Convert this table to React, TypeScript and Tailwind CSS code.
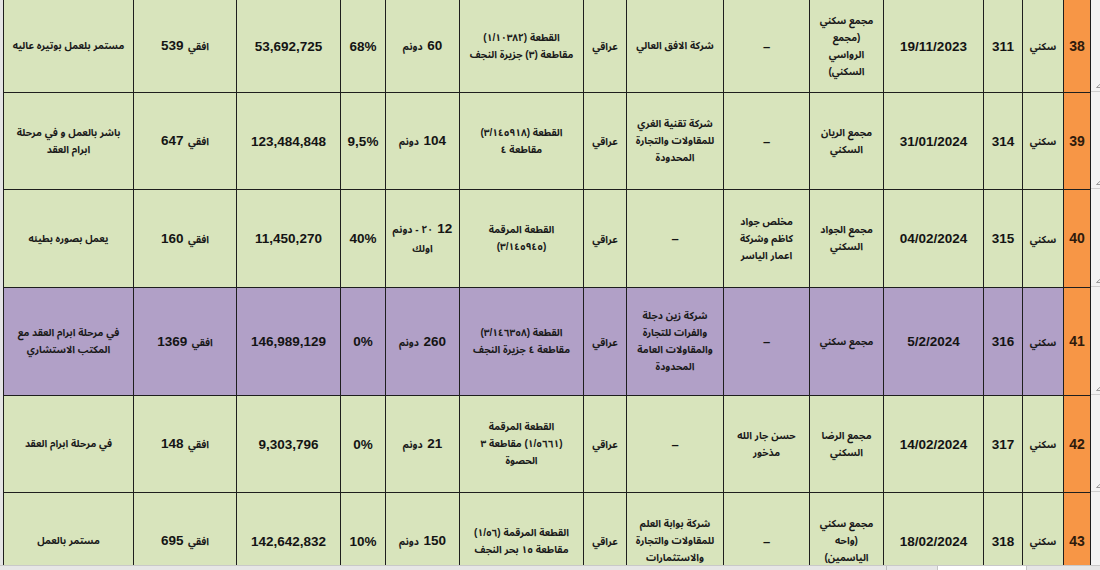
import React from 'react'

// Excel-like sheet: residential projects list (RTL)

const N = ({ children }: { children: React.ReactNode }) => (
  <span className="font-bold text-[13.5px] text-[#141414]">{children}</span>
)

const A = ({ children }: { children: React.ReactNode }) => (
  <span className="font-bold text-[10px] text-[#1a1a1a] whitespace-nowrap">{children}</span>
)

const Lines = ({ items }: { items: string[] }) => (
  <div className="font-bold text-[10px] leading-[17px] text-[#1a1a1a] whitespace-nowrap">
    {items.map((t, i) => (
      <div key={i}>{t}</div>
    ))}
  </div>
)

const Dash = () => <span className="font-bold text-[13px] text-[#141414]">–</span>

type Row = {
  h: string
  bg: string
  cells: React.ReactNode[]
  first?: boolean
}

const GREEN = 'bg-[#d8e4bc]'
const PURPLE = 'bg-[#b1a0c7]'

const rows: Row[] = [
  {
    h: 'h-[92px]',
    bg: GREEN,
    first: true,
    cells: [
      '38',
      <A>سكني</A>,
      <N>311</N>,
      <N>19/11/2023</N>,
      <Lines items={['مجمع سكني', '(مجمع', 'الرواسي', 'السكني)']} />,
      <Dash />,
      <Lines items={['شركة الافق العالي']} />,
      <A>عراقي</A>,
      <Lines items={['القطعة (١/١٠٣٨٢)', 'مقاطعة (٣) جزيرة النجف']} />,
      <>
        <N>60</N> <A>دونم</A>
      </>,
      <N>68%</N>,
      <N>53,692,725</N>,
      <>
        <A>افقي</A> <N>539</N>
      </>,
      <Lines items={['مستمر بلعمل بوتيره عاليه']} />,
    ],
  },
  {
    h: 'h-[97px]',
    bg: GREEN,
    cells: [
      '39',
      <A>سكني</A>,
      <N>314</N>,
      <N>31/01/2024</N>,
      <Lines items={['مجمع الريان', 'السكني']} />,
      <Dash />,
      <Lines items={['شركة تقنية الغري', 'للمقاولات والتجارة', 'المحدودة']} />,
      <A>عراقي</A>,
      <Lines items={['القطعة (٣/١٤٥٩١٨)', 'مقاطعة ٤']} />,
      <>
        <N>104</N> <A>دونم</A>
      </>,
      <N>9,5%</N>,
      <N>123,484,848</N>,
      <>
        <A>افقي</A> <N>647</N>
      </>,
      <Lines items={['باشر بالعمل و في مرحلة', 'ابرام العقد']} />,
    ],
  },
  {
    h: 'h-[98px]',
    bg: GREEN,
    cells: [
      '40',
      <A>سكني</A>,
      <N>315</N>,
      <N>04/02/2024</N>,
      <Lines items={['مجمع الجواد', 'السكني']} />,
      <Lines items={['مخلص جواد', 'كاظم وشركة', 'اعمار الياسر']} />,
      <Dash />,
      <A>عراقي</A>,
      <Lines items={['القطعة المرقمة', '(٣/١٤٥٩٤٥)']} />,
      <div className="leading-[17px] whitespace-nowrap">
        <div>
          <N>12</N> <A>٢٠ - دونم</A>
        </div>
        <div>
          <A>اولك</A>
        </div>
      </div>,
      <N>40%</N>,
      <N>11,450,270</N>,
      <>
        <A>افقي</A> <N>160</N>
      </>,
      <Lines items={['يعمل بصوره بطيئه']} />,
    ],
  },
  {
    h: 'h-[108px]',
    bg: PURPLE,
    cells: [
      '41',
      <A>سكني</A>,
      <N>316</N>,
      <N>5/2/2024</N>,
      <Lines items={['مجمع سكني']} />,
      <Dash />,
      <Lines items={['شركة زين دجلة', 'والفرات للتجارة', 'والمقاولات العامة', 'المحدودة']} />,
      <A>عراقي</A>,
      <Lines items={['القطعة (٣/١٤٦٣٥٨)', 'مقاطعة ٤ جزيرة النجف']} />,
      <>
        <N>260</N> <A>دونم</A>
      </>,
      <N>0%</N>,
      <N>146,989,129</N>,
      <>
        <A>افقي</A> <N>1369</N>
      </>,
      <Lines items={['في مرحلة ابرام العقد مع', 'المكتب الاستشاري']} />,
    ],
  },
  {
    h: 'h-[97px]',
    bg: GREEN,
    cells: [
      '42',
      <A>سكني</A>,
      <N>317</N>,
      <N>14/02/2024</N>,
      <Lines items={['مجمع الرضا', 'السكني']} />,
      <Lines items={['حسن جار الله', 'مذخور']} />,
      <Dash />,
      <A>عراقي</A>,
      <Lines items={['القطعة المرقمة', '(١/٥٦٦١) مقاطعة ٣', 'الحصوة']} />,
      <>
        <N>21</N> <A>دونم</A>
      </>,
      <N>0%</N>,
      <N>9,303,796</N>,
      <>
        <A>افقي</A> <N>148</N>
      </>,
      <Lines items={['في مرحلة ابرام العقد']} />,
    ],
  },
  {
    h: 'h-[97px]',
    bg: GREEN,
    cells: [
      '43',
      <A>سكني</A>,
      <N>318</N>,
      <N>18/02/2024</N>,
      <Lines items={['مجمع سكني', '(واحه', 'الياسمين)']} />,
      <Dash />,
      <Lines items={['شركة بوابة العلم', 'للمقاولات والتجارة', 'والاستثمارات']} />,
      <A>عراقي</A>,
      <Lines items={['القطعة المرقمة (١/٥٦)', 'مقاطعة ١٥ بحر النجف']} />,
      <>
        <N>150</N> <A>دونم</A>
      </>,
      <N>10%</N>,
      <N>142,642,832</N>,
      <>
        <A>افقي</A> <N>695</N>
      </>,
      <Lines items={['مستمر بالعمل']} />,
    ],
  },
]

// column widths, right to left
const cols = [
  'w-[27px]',
  'w-[41px]',
  'w-[39px]',
  'w-[100px]',
  'w-[74px]',
  'w-[86px]',
  'w-[97px]',
  'w-[43px]',
  'w-[124px]',
  'w-[74px]',
  'w-[45px]',
  'w-[104px]',
  'w-[103px]',
  'w-[130px]',
]

const stripHeights = ['h-[92px]', 'h-[97px]', 'h-[98px]', 'h-[108px]', 'h-[97px]', 'h-[97px]']

const Corner = () => (
  <svg width="7" height="7" viewBox="0 0 7 7" className="mb-[3px] -mr-[2px]">
    <polyline points="7,0.5 0.5,6.5 7,6.5" fill="none" stroke="#9a9a9a" strokeWidth="1" />
  </svg>
)

export default function App() {
  return (
    <div className="w-[1100px] h-[570px] overflow-hidden bg-[#efefef] flex flex-col font-['Liberation_Sans','Noto_Sans_Arabic',sans-serif]">
      <div className="h-[565px] flex overflow-hidden">
        <div className="w-[3px] shrink-0 bg-[#e4e4e4]" />

        <table dir="rtl" className="w-[1087px] shrink-0 table-fixed border-collapse self-start">
          <colgroup>
            {cols.map((c, i) => (
              <col key={i} className={c} />
            ))}
          </colgroup>
          <tbody>
            {rows.map((r, ri) => (
              <tr key={ri} className={r.h}>
                {r.cells.map((c, ci) => (
                  <td
                    key={ci}
                    className={`border border-[#1e1e1e] text-center align-middle p-0 leading-[17px] overflow-hidden ${
                      r.first ? 'border-t-0' : ''
                    } ${ci === 0 ? 'bg-[#f79646]' : r.bg}`}
                  >
                    {ci === 0 ? (
                      <span className="font-bold text-[14px] text-[#2e1a0c]">{c}</span>
                    ) : (
                      c
                    )}
                  </td>
                ))}
              </tr>
            ))}
          </tbody>
        </table>

        {/* row header strip on the right edge */}
        <div className="w-[10px] shrink-0 flex flex-col bg-[#f3f3f3]">
          {stripHeights.map((h, i) => (
            <div
              key={i}
              className={`${h} shrink-0 border-b border-[#cfcfcf] flex items-end justify-end`}
            >
              <Corner />
            </div>
          ))}
        </div>
      </div>

      {/* sheet tabs bar */}
      <div className="h-[5px] flex bg-[#e6e6e6] border-t border-[#c9c9c9] overflow-hidden">
        <div className="ml-[850px] w-[37px] border-r border-[#bdbdbd]" />
        <div className="ml-[50px] w-[90px] bg-white border-x border-[#c4c4c4]" />
      </div>
    </div>
  )
}
